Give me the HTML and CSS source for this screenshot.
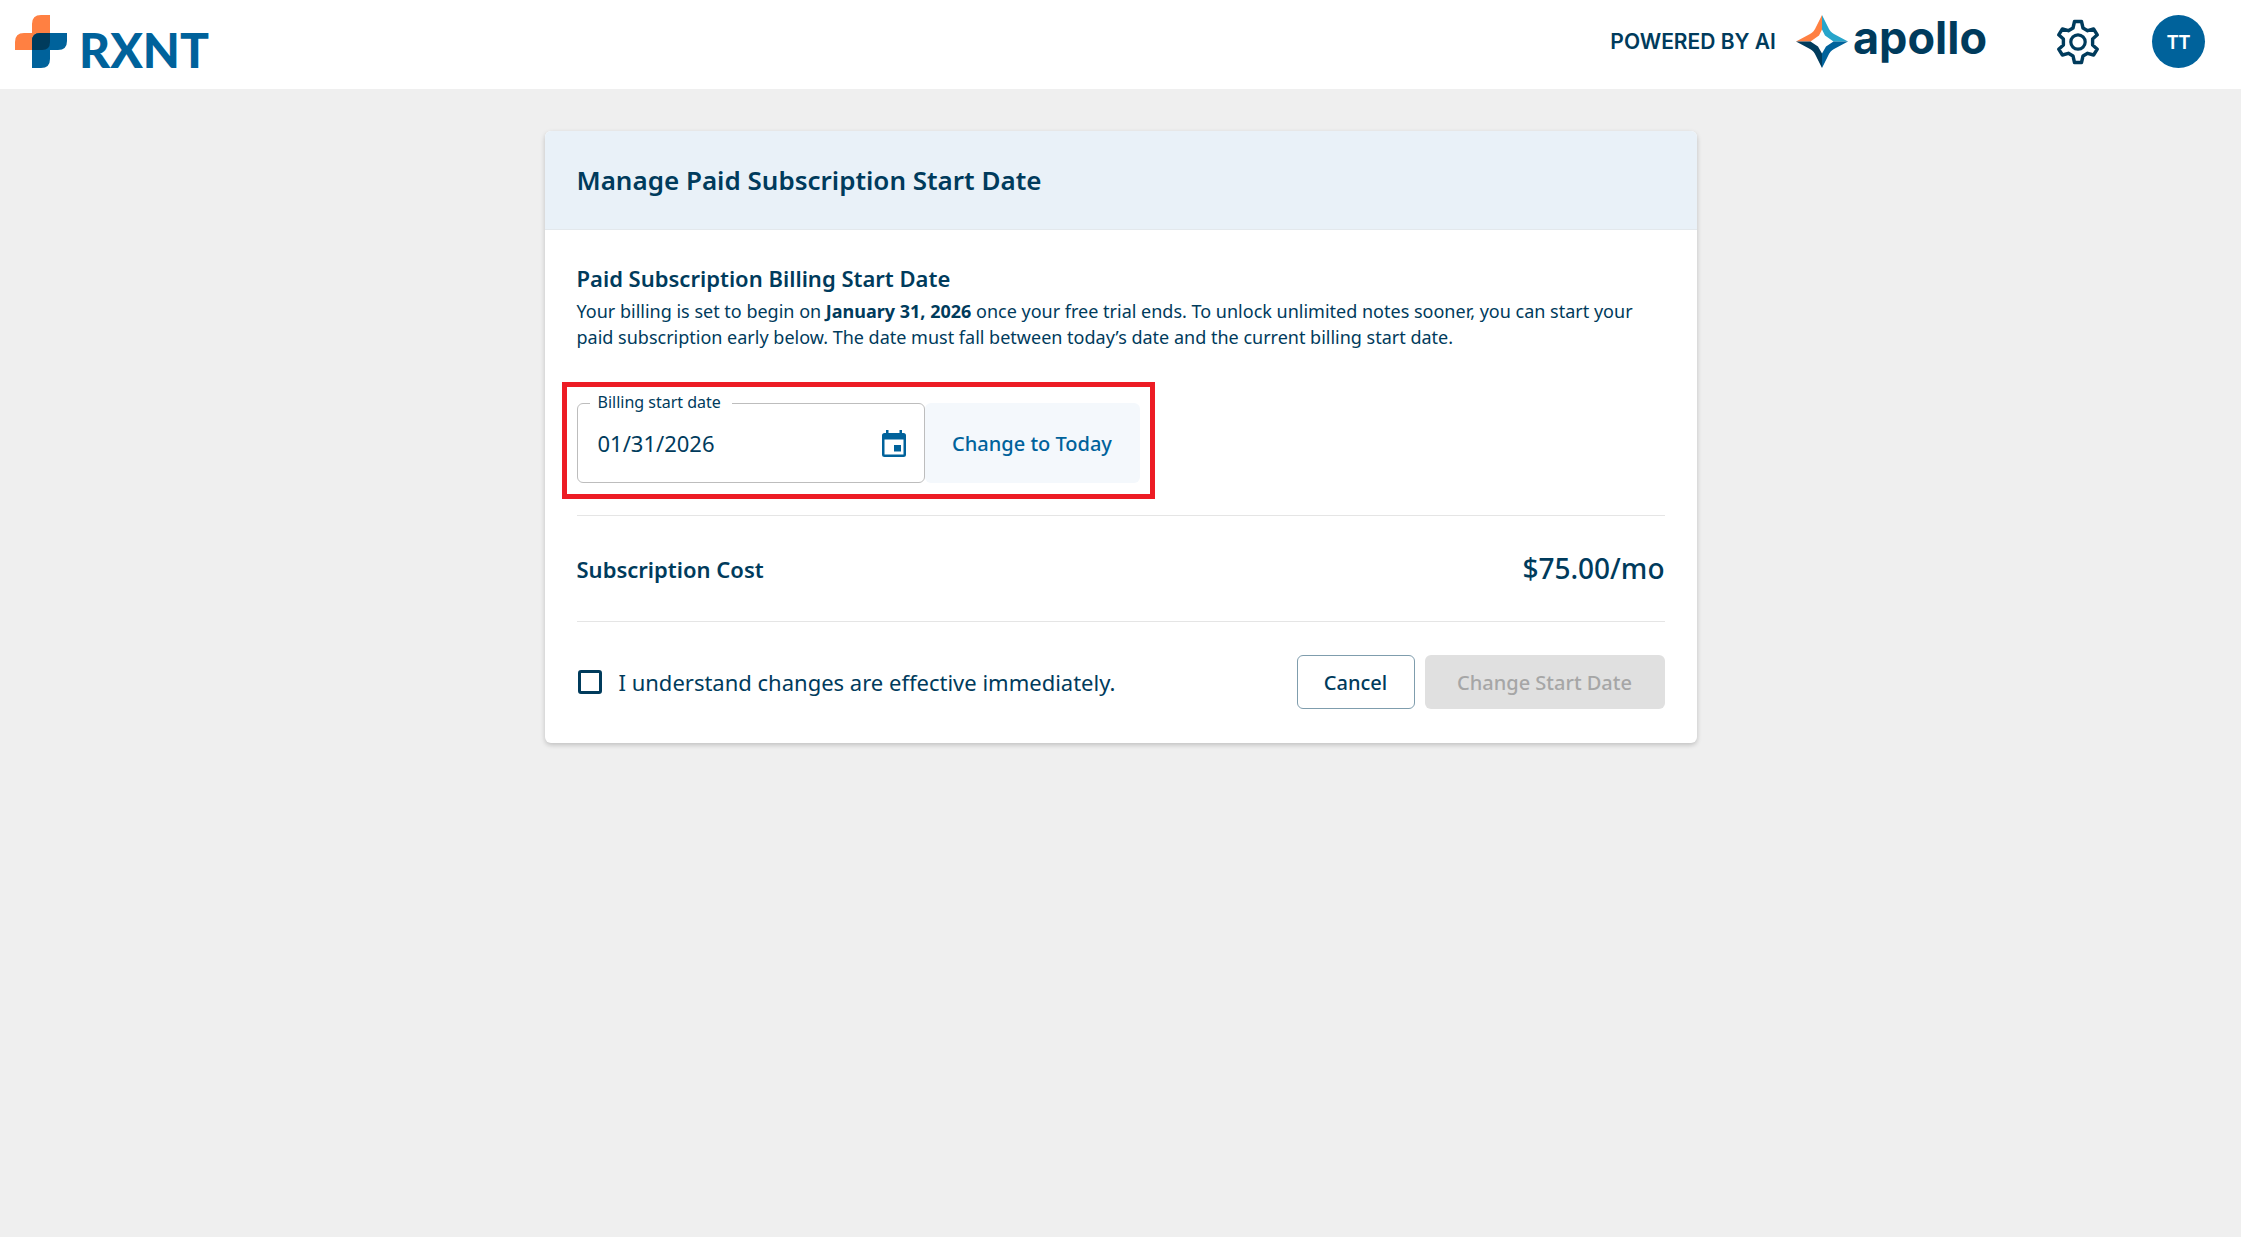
FILE: index.html
```html
<!DOCTYPE html>
<html lang="en">
<head>
    <meta charset="UTF-8">
    <meta name="viewport" content="width=device-width, initial-scale=1.0">
    <title>RXNT - Manage Paid Subscription</title>
    <link rel="stylesheet" href="styles.css">
</head>
<body>
    <header class="topbar">
        <a class="logo" href="#">
            <svg width="52" height="53" viewBox="0 0 52 53" aria-hidden="true">
                <path fill="#ff8042" d="M17 18V9Q17 0 26 0H35V35H0V27Q0 18 9 18Z"/>
                <path fill="#00629b" d="M17 53V26Q17 18 25 18H52V26Q52 35 43 35H35V44Q35 53 26 53Z"/>
                <path fill="#003b5c" d="M17 35V26Q17 18 25 18H35V27Q35 35 27 35Z"/>
            </svg>
            <span class="logo-text">RXNT</span>
        </a>

        <div class="topbar-right">
            <span class="powered">POWERED BY AI</span>
            <a class="apollo" href="#">
                <svg width="52" height="53" viewBox="0 0 52 53" aria-hidden="true">
                    <path fill="#ff8042" d="M26 0V14.5L23 20.5L14.5 26.5H0L14 19Q18 17 20 12Z"/>
                    <path fill="#27a5cb" d="M26 0V14.5L29 20.5L37.5 26.5H52L38 19Q34 17 32 12Z"/>
                    <path fill="#003b5c" d="M26 53V38.5L22 31.5L14.5 26.5H0L14 34Q18 36 20 41Z"/>
                    <path fill="#00629b" d="M26 53V38.5L30 31.5L37.5 26.5H52L38 34Q34 36 32 41Z"/>
                </svg>
                <span class="apollo-text">apollo</span>
            </a>
            <button type="button" class="icon-button" aria-label="Settings">
                <svg width="46" height="46" viewBox="-23 -23 46 46" aria-hidden="true">
                    <path fill="none" stroke="#003b5c" stroke-width="3.4" stroke-linejoin="round" d="M-3.5 -20.5H3.5L5 -14L9.6 -11.3L15.6 -13L19.3 -7.2L14.6 -3V3L19.3 7.2L15.6 13L9.6 11.3L5 14L3.5 20.5H-3.5L-5 14L-9.6 11.3L-15.6 13L-19.3 7.2L-14.6 3V-3L-19.3 -7.2L-15.6 -13L-9.6 -11.3L-5 -14Z"/>
                    <circle r="7.2" fill="none" stroke="#003b5c" stroke-width="3.2"/>
                </svg>
            </button>
            <button type="button" class="avatar">TT</button>
        </div>
    </header>

    <main class="page">
        <form class="card">
            <div class="card-header">
                <h1>Manage Paid Subscription Start Date</h1>
            </div>

            <div class="card-body">
                <section class="billing">
                    <h2>Paid Subscription Billing Start Date</h2>
                    <p>Your billing is set to begin on <strong>January 31, 2026</strong> once your free trial ends. To unlock unlimited notes sooner, you can start your paid subscription early below. The date must fall between today’s date and the current billing start date.</p>

                    <div class="date-row">
                        <div class="date-field">
                            <label for="startDate">Billing start date</label>
                            <input type="text" id="startDate" name="startDate" value="01/31/2026">
                            <button type="button" class="calendar-button" aria-label="Choose date">
                                <svg width="24" height="27" viewBox="0 0 24 27" aria-hidden="true">
                                    <path fill="#00629b" fill-rule="evenodd" d="M4 0H6.5V3H17.5V0H20V3H21.5Q24 3 24 5.5V24.5Q24 27 21.5 27H2.5Q0 27 0 24.5V5.5Q0 3 2.5 3H4ZM2.5 9.5V24.5H21.5V9.5Z"/>
                                    <path fill="#00629b" d="M12 15H19V21.5H12Z"/>
                                </svg>
                            </button>
                        </div>
                        <button type="button" class="today-button">Change to Today</button>
                    </div>
                </section>

                <section class="cost">
                    <h2>Subscription Cost</h2>
                    <span class="price">$75.00/mo</span>
                </section>

                <div class="actions">
                    <input type="checkbox" id="understand" name="understand">
                    <label for="understand">I understand changes are effective immediately.</label>
                    <button type="button" class="cancel-button">Cancel</button>
                    <button type="submit" class="submit-button" disabled>Change Start Date</button>
                </div>
            </div>
        </form>
    </main>
</body>
</html>
```
FILE: styles.css
```css
* {
    box-sizing: border-box;
}

body {
    margin: 0;
    min-height: 100vh;
    font-family: "Noto Sans", "Open Sans", sans-serif;
    font-size: 18px;
    color: #003b5c;
    background-color: #efefef;
}

h1,
h2,
p {
    margin: 0;
}

button,
input {
    font-family: inherit;
    color: inherit;
}

button {
    padding: 0;
    border: none;
    background: none;
    cursor: pointer;
}

svg {
    display: block;
}

.topbar {
    display: flex;
    justify-content: space-between;
    align-items: flex-start;
    padding: 15px 36px 21px 15px;
    background-color: #fff;
}

.logo,
.apollo {
    display: flex;
    height: 53px;
    text-decoration: none;
}

.logo-text {
    margin-left: 12px;
    font-family: Lato, sans-serif;
    font-size: 48px;
    font-weight: 900;
    line-height: 70px;
    color: #00629b;
}

.topbar-right {
    display: flex;
    align-items: center;
}

.powered {
    margin-right: 20px;
    font-family: Inter, sans-serif;
    font-size: 21px;
    font-weight: 600;
}

.apollo-text {
    margin-left: 5px;
    font-family: Inter, sans-serif;
    font-size: 45px;
    font-weight: 700;
    line-height: 46px;
    color: #003b5c;
}

.icon-button {
    margin-left: 68px;
}

.avatar {
    width: 53px;
    height: 53px;
    margin-left: 51px;
    border-radius: 50%;
    font-size: 20px;
    font-weight: 600;
    line-height: 20px;
    color: #fff;
    background-color: #00629b;
}

.page {
    padding: 42px 32px;
}

.card {
    max-width: 1152px;
    margin: 0 auto;
    border-radius: 6px;
    background-color: #fff;
    box-shadow: 0 2px 5px rgba(0, 0, 0, 0.2);
}

.card-header {
    padding: 32px;
    border-bottom: 1px solid #e3e8ec;
    border-radius: 6px 6px 0 0;
    background-color: #e9f1f8;
}

.card-header h1 {
    font-size: 26px;
    font-weight: 600;
    line-height: 34px;
}

.card-body {
    padding: 0 32px;
}

.card-body h2 {
    font-size: 22px;
    font-weight: 600;
    line-height: 28px;
}

.billing {
    padding: 34px 0 16px;
    border-bottom: 1px solid #e5e5e5;
}

.billing p {
    margin-top: 6px;
    line-height: 26px;
}

.date-row {
    display: flex;
    width: 593px;
    margin: 32px 0 0 -15px;
    padding: 16px 10px 11px;
    border: 5px solid #ed1c24;
}

.date-field {
    display: flex;
    position: relative;
    align-items: center;
    width: 348px;
    height: 80px;
    padding: 0 18px 0 20px;
    border: 1px solid #bdbdbd;
    border-radius: 6px;
}

/* label sits over the top border */
.date-field label {
    position: absolute;
    top: -12px;
    left: 12px;
    padding: 0 11px 0 8px;
    font-size: 16px;
    line-height: 20px;
    background-color: #fff;
}

.date-field input {
    flex: 1;
    min-width: 0;
    padding: 0;
    border: none;
    outline: none;
    font-size: 22px;
    background: none;
}

.today-button {
    flex: 1;
    border-radius: 6px;
    font-size: 20px;
    font-weight: 500;
    color: #00629b;
    background-color: #f4f8fc;
}

.cost {
    display: flex;
    justify-content: space-between;
    align-items: center;
    padding: 34px 0;
    border-bottom: 1px solid #e5e5e5;
}

.price {
    font-size: 28px;
    font-weight: 500;
    line-height: 37px;
}

.actions {
    display: flex;
    align-items: center;
    padding: 33px 0 34px;
}

.actions input {
    appearance: none;
    width: 24px;
    height: 24px;
    margin: 0 17px 0 1px;
    border: 3px solid #003b5c;
    border-radius: 3px;
}

.actions label {
    margin-right: auto;
    font-size: 22px;
}

.cancel-button,
.submit-button {
    height: 54px;
    padding: 0 25px;
    border-radius: 6px;
    font-size: 20px;
    font-weight: 500;
}

.cancel-button {
    min-width: 118px;
    border: 1px solid #7f9dad;
}

.submit-button {
    min-width: 240px;
    margin-left: 10px;
    color: #a6a6a6;
    background-color: #e0e0e0;
}
```
